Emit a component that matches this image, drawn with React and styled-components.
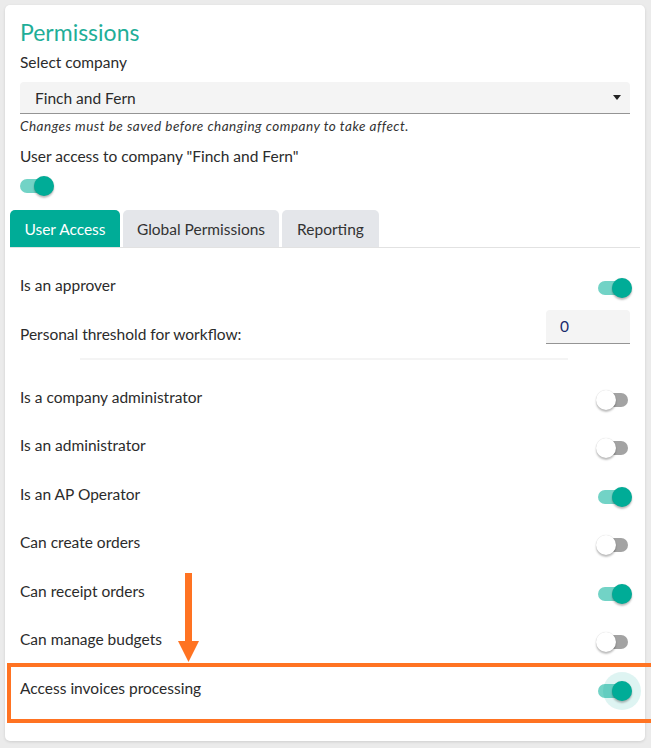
import React from 'react';
import styled, { createGlobalStyle } from 'styled-components';

const GlobalStyle = createGlobalStyle`
  html, body {
    margin: 0;
    padding: 0;
    background: #ebebeb;
    font-family: Lato, "Open Sans", sans-serif;
    color: #2b2b2b;
  }
`;

const Page = styled.div`
  padding: 5px 6px 6px 5px;
  position: relative;
`;

const Card = styled.div`
  background: #ffffff;
  border-radius: 5px;
  box-shadow: 0 1px 3px rgba(0, 0, 0, 0.12);
  padding: 14px 15px 29px 15px;
`;

const Title = styled.h2`
  margin: 0 0 7px;
  color: #1fae98;
  font-weight: 400;
  font-size: 23px;
  line-height: 26px;
`;

const Label = styled.div`
  font-size: 15.5px;
  line-height: 20px;
`;

const Select = styled.div`
  margin-top: 10px;
  height: 31px;
  background: #f4f4f4;
  border-bottom: 1px solid #949494;
  border-radius: 4px 4px 0 0;
  display: flex;
  align-items: center;
  justify-content: space-between;
  padding: 0 9px 0 15px;
  font-size: 15.5px;
`;

const Caret = styled.span`
  width: 0;
  height: 0;
  border-left: 4px solid transparent;
  border-right: 4px solid transparent;
  border-top: 5px solid #222;
`;

const Hint = styled.div`
  font-size: 13.5px;
  letter-spacing: 0.5px;
  font-style: italic;
  line-height: 16px;
  margin-top: 4px;
  color: #333;
`;

const AccessLabel = styled(Label)`
  margin-top: 12px;
`;

const TopSwitchWrap = styled.div`
  margin-top: 10px;
  height: 20px;
  display: flex;
  align-items: center;
`;

const Track = styled.span`
  position: relative;
  display: inline-block;
  width: 30px;
  height: 14px;
  border-radius: 7px;
  background: ${(p) => (p.$on ? '#72d3c6' : '#a3a3a3')};
  flex-shrink: 0;
`;

const Thumb = styled.span`
  position: absolute;
  top: -3px;
  left: ${(p) => (p.$on ? '14px' : '-2px')};
  width: 20px;
  height: 20px;
  border-radius: 50%;
  background: ${(p) => (p.$on ? '#00ac97' : '#ffffff')};
  box-shadow: 0 2px 2px rgba(0, 0, 0, 0.25), 0 0 1px rgba(0, 0, 0, 0.2);
`;

const Ripple = styled.span`
  position: absolute;
  top: -12px;
  left: 5px;
  width: 38px;
  height: 38px;
  border-radius: 50%;
  background: rgba(0, 172, 151, 0.13);
`;

function Switch({ on, focus }) {
  return (
    <Track $on={on}>
      {focus && <Ripple />}
      <Thumb $on={on} />
    </Track>
  );
}

const Tabs = styled.div`
  margin: 14px -10px 0 -10px;
  display: flex;
  gap: 3px;
  border-bottom: 1px solid #e2e2e2;
`;

const Tab = styled.div`
  height: 37px;
  display: flex;
  align-items: center;
  justify-content: center;
  width: ${(p) => p.$w}px;
  border-radius: 5px 5px 0 0;
  font-size: 15.5px;
  background: ${(p) => (p.$active ? '#00ac97' : '#e4e6ea')};
  color: ${(p) => (p.$active ? '#ffffff' : '#333')};
`;

const Panel = styled.div`
  padding-top: 13px;
`;

const Row = styled.div`
  height: 48.5px;
  display: flex;
  align-items: center;
  justify-content: space-between;
  font-size: 15.5px;
`;

const RowSwitch = styled.div`
  margin-top: 8px;
  margin-right: 2px;
`;

const ThresholdRow = styled.div`
  display: flex;
  justify-content: space-between;
  align-items: flex-start;
  height: 48px;
  font-size: 15.5px;
`;

const ThresholdLabel = styled.div`
  padding-top: 15px;
`;

const NumberBox = styled.div`
  width: 70px;
  height: 33px;
  padding-left: 14px;
  background: #f4f4f4;
  border-bottom: 1px solid #949494;
  border-radius: 4px 4px 0 0;
  display: flex;
  align-items: center;
  font-size: 15.5px;
  color: #1a2a6c;
`;

const Divider = styled.div`
  height: 2px;
  background: #f4f4f4;
  margin: 0 62px 13px 60px;
`;

const Highlight = styled.div`
  position: absolute;
  left: 7px;
  top: 663px;
  width: 640px;
  height: 52px;
  border: 4px solid #ff7322;
  border-right: none;
  pointer-events: none;
`;

const Arrow = styled.svg`
  position: absolute;
  left: 178px;
  top: 573px;
`;

const rows = [
  ['Is a company administrator', false],
  ['Is an administrator', false],
  ['Is an AP Operator', true],
  ['Can create orders', false],
  ['Can receipt orders', true],
  ['Can manage budgets', false],
];

export default function App() {
  return (
    <Page>
      <GlobalStyle />
      <Card>
        <Title>Permissions</Title>
        <Label>Select company</Label>
        <Select>
          <span>Finch and Fern</span>
          <Caret />
        </Select>
        <Hint>Changes must be saved before changing company to take affect.</Hint>
        <AccessLabel>User access to company "Finch and Fern"</AccessLabel>
        <TopSwitchWrap>
          <Switch on />
        </TopSwitchWrap>
        <Tabs>
          <Tab $active $w={110}>User Access</Tab>
          <Tab $w={156}>Global Permissions</Tab>
          <Tab $w={97}>Reporting</Tab>
        </Tabs>
        <Panel>
          <Row>
            <span>Is an approver</span>
            <RowSwitch>
              <Switch on />
            </RowSwitch>
          </Row>
          <ThresholdRow>
            <ThresholdLabel>Personal threshold for workflow:</ThresholdLabel>
            <NumberBox>0</NumberBox>
          </ThresholdRow>
          <Divider />
          {rows.map(([label, on]) => (
            <Row key={label}>
              <span>{label}</span>
              <RowSwitch>
                <Switch on={on} />
              </RowSwitch>
            </Row>
          ))}
          <Row>
            <span>Access invoices processing</span>
            <RowSwitch>
              <Switch on focus />
            </RowSwitch>
          </Row>
        </Panel>
      </Card>
      <Highlight />
      <Arrow width="21" height="89" viewBox="0 0 21 89">
        <rect x="7" y="0" width="7" height="70" fill="#ff7322" />
        <polygon points="0,68 21,68 10.5,89" fill="#ff7322" />
      </Arrow>
    </Page>
  );
}
